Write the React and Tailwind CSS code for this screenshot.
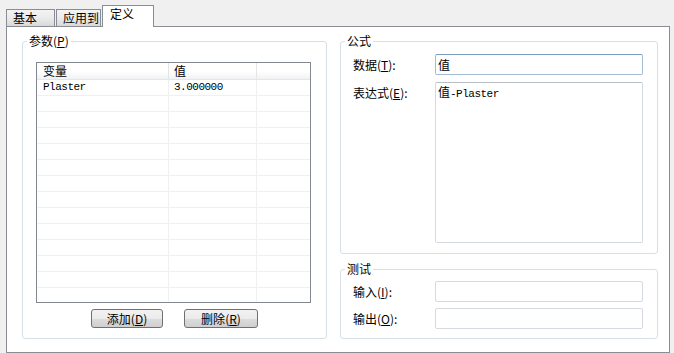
import React from "react";

const Key = ({ k }) => (
  <span>
    (<span className="underline">{k}</span>)
  </span>
);

const Group = ({ label, className = "", children }) => (
  <fieldset className={`border border-[#d5dfe5] rounded-[3px] ${className}`}>
    <legend className="ml-[4px] px-[2px] text-[12px] leading-[14px] text-black">{label}</legend>
    {children}
  </fieldset>
);

const Tab = ({ label, width, active }) =>
  active ? (
    <div
      className={`relative z-10 -mb-px h-[22px] border border-b-0 border-[#898c95] bg-white pl-[7px] pt-[1px] text-[12px] leading-[14px] ${width}`}
    >
      {label}
    </div>
  ) : (
    <div
      className={`h-[17px] border border-b-0 border-[#898c95] bg-gradient-to-b from-[#f3f3f3] via-[#ebebeb] to-[#d8d8d8] pl-[6px] pt-[1px] text-[12px] leading-[14px] ${width}`}
    >
      {label}
    </div>
  );

const Btn = ({ children, width }) => (
  <button
    className={`h-[19px] rounded-[3px] border border-[#707070] bg-[linear-gradient(#f2f2f2_0%,#ebebeb_50%,#dddddd_50%,#cfcfcf_100%)] text-[12px] leading-[14px] ${width}`}
  >
    {children}
  </button>
);

const cols = "grid grid-cols-[132px_88px_53px]";
const mono = "font-['Liberation_Mono','Noto_Sans_CJK_SC',monospace] text-[11px] tracking-[-0.5px]";

export default function App() {
  const rows = Array.from({ length: 14 }, (_, i) => i);
  return (
    <div className="w-[674px] h-[353px] overflow-hidden bg-[#f0f0f0] text-black font-['Noto_Sans_CJK_SC',sans-serif]">
      <div className="flex h-[26px] items-end gap-[1px] pl-[6px]">
        <Tab label="基本" width="w-[49px]" />
        <Tab label="应用到" width="w-[45px]" />
        <Tab label="定义" width="w-[52px]" active />
      </div>

      <div className="ml-[6px] flex h-[327px] w-[664px] gap-[13px] border border-[#898c95] bg-white pl-[15px] pt-[7px]">
        {/* parameters */}
        <Group label={<>参数<Key k="P" /></>} className="h-[305px] w-[305px]">
          <div className="ml-[13px] mt-[14px] h-[241px] w-[275px] overflow-hidden border border-[#828790] bg-white">
            <div className={`${cols} h-[17px] border-b border-[#e5e5e5] bg-gradient-to-b from-white via-white to-[#f1f2f4] text-[12px] leading-[16px]`}>
              <div className="border-r border-[#e5e5e5] pl-[6px]">变量</div>
              <div className="border-r border-[#e5e5e5] pl-[5px]">值</div>
              <div />
            </div>
            {rows.map((i) => (
              <div key={i} className={`${cols} h-[16px] border-b border-[#f0f0f0] leading-[15px]`}>
                <div className={`border-r border-[#f0f0f0] pl-[6px] ${mono}`}>{i === 0 ? "Plaster" : ""}</div>
                <div className={`border-r border-[#f0f0f0] pl-[5px] ${mono}`}>{i === 0 ? "3.000000" : ""}</div>
                <div />
              </div>
            ))}
          </div>
          <div className="mt-[6px] flex justify-center gap-[21px]">
            <Btn width="w-[72px]">添加<Key k="D" /></Btn>
            <Btn width="w-[74px]">删除<Key k="R" /></Btn>
          </div>
        </Group>

        {/* formula + test */}
        <div className="flex w-[318px] flex-col">
          <Group label="公式" className="h-[220px]">
            <div className="mt-[6px] flex items-center">
              <div className="ml-[12px] w-[82px] text-[12px] leading-[14px]">数据<Key k="T" />:</div>
              <div className="h-[21px] w-[208px] rounded-[2px] border border-[#a3bbd3] border-t-[#7b9ebd] pl-[2px] text-[12px] leading-[19px]">
                值
              </div>
            </div>
            <div className="mt-[7px] flex items-start">
              <div className="ml-[12px] mt-[4px] w-[82px] text-[12px] leading-[14px]">表达式<Key k="E" />:</div>
              <div className="h-[161px] w-[208px] rounded-[2px] border border-[#d5dae0] border-t-[#b9c0c7] pl-[2px] pt-[2px] text-[12px] leading-[14px]">
                值<span className={mono}>-Plaster</span>
              </div>
            </div>
          </Group>

          <Group label="测试" className="mt-[8px] h-[77px]">
            <div className="mt-[5px] flex items-center">
              <div className="ml-[12px] w-[82px] text-[12px] leading-[14px]">输入<Key k="I" />:</div>
              <div className="h-[21px] w-[208px] rounded-[2px] border border-[#d5dae0]" />
            </div>
            <div className="mt-[6px] flex items-center">
              <div className="ml-[12px] w-[82px] text-[12px] leading-[14px]">输出<Key k="O" />:</div>
              <div className="h-[21px] w-[208px] rounded-[2px] border border-[#d5dae0]" />
            </div>
          </Group>
        </div>
      </div>
    </div>
  );
}
